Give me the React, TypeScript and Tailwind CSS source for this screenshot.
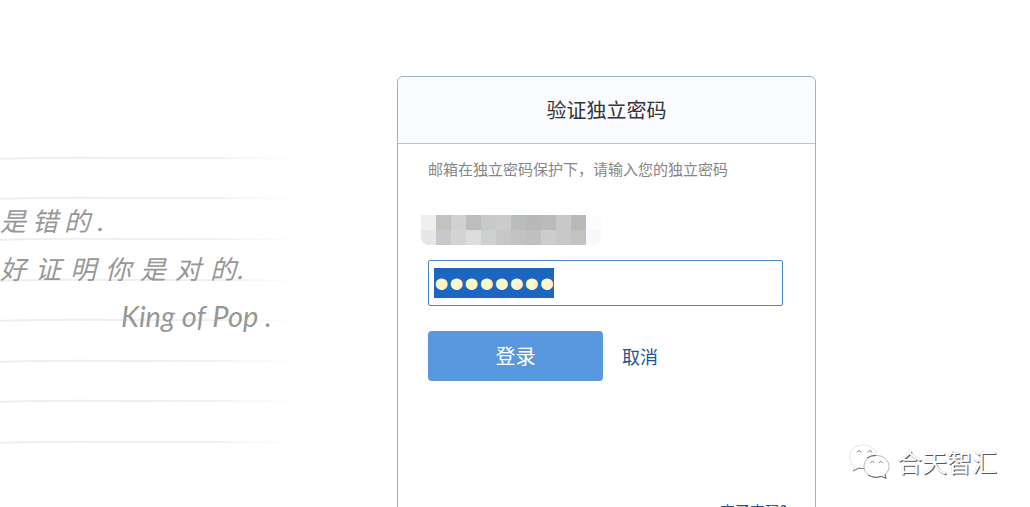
import { useEffect, useRef } from 'react';

const mosaic = [
  '#f0efee', '#c3c2c1', '#cfd1d4', '#bfbdbb', '#c7c9cc', '#cccbc9', '#b9bdbb', '#b7b8b7', '#bababa', '#c7c8c8', '#bab9b7', '#fbfcfe',
  '#e7e6e5', '#c6c8cb', '#d5d3d1', '#dcdddd', '#cdd0cf', '#c7c7c7', '#c2c2c1', '#bebfc1', '#cdcdcd', '#c8c8c8', '#c3c2bf', '#f8f9fb',
];

const rules = [18, 58, 99, 140, 180, 221, 261, 302];

function Notebook() {
  return (
    <section className="relative h-[330px] w-full overflow-hidden leading-8 whitespace-nowrap text-[#979797]">
      <svg className="absolute inset-0" width="310" height="330" fill="none" aria-hidden="true">
        <defs>
          <linearGradient id="fade" gradientUnits="userSpaceOnUse" x1="0" x2="300" y1="0" y2="0">
            <stop offset="0" stopColor="#eeeeee" />
            <stop offset="0.7" stopColor="#f0f0f0" />
            <stop offset="1" stopColor="#ffffff" />
          </linearGradient>
        </defs>
        {rules.map((y) => (
          <path key={y} d={`M0 ${y + 0.8}C40 ${y - 1} 90 ${y - 0.5} 150 ${y}S250 ${y} 300 ${y + 0.5}`} stroke="url(#fade)" strokeWidth="2" />
        ))}
      </svg>
      <div className="relative pt-16 font-['Noto_Sans_CJK_SC',sans-serif] text-[26px] leading-8 italic">
        <p className="flex gap-1.5">
          <span>是</span>
          <span>错</span>
          <span>的</span>
          <span>.</span>
        </p>
        <p className="flex gap-[9px] pt-4">
          <span>好</span>
          <span>证</span>
          <span>明</span>
          <span>你</span>
          <span>是</span>
          <span>对</span>
          <span>的.</span>
        </p>
      </div>
      <p className="relative pt-4 pl-[121px] font-['Lato','Liberation_Sans',sans-serif] text-[29px] leading-8 italic">King of Pop .</p>
    </section>
  );
}

function Watermark() {
  return (
    <div className="flex items-center gap-[7px]">
      <svg className="shrink-0" width="42" height="36" viewBox="0 0 42 36" aria-hidden="true">
        <path d="M15.500 2C7.500 2 1.500 7 1.500 14c0 4 2 7 5 9l-1.500 5 6-3c2 .5 4 .8 6 .5C15 17 22 12 29 12 27.500 6 22 2 15.500 2Z" fill="#fff" stroke="#d8d8d8" strokeWidth="0.700" />
        <path d="M5 28l6-3q3 .8 6 .5" fill="none" stroke="#777" />
        <path d="M28.500 12.500C21 12.500 16 17.500 16 23.500s5 11 12.500 11q3 0 5-1l4.500 2-1-4c2.500-2 4-4.500 4-8 0-6-5-11-12.500-11Z" fill="#fff" stroke="#a9a9a9" strokeWidth="0.800" />
        <path d="M20 32q4 2.500 9 2.300l4.500-1 4.500 2-1-4M19 15q4-3 9-2.500" fill="none" stroke="#666" />
        <path d="M9 9.500q2-4 4 0M20 9.500q2-4 4 0M22.500 20q1.800-3.500 3.600 0M31 20q1.800-3.500 3.600 0" fill="none" stroke="#8c8c8c" />
      </svg>
      <span className="text-[25px] leading-9 whitespace-nowrap text-white [text-shadow:1px_1px_0_#555555,0_0_1px_#bbbbbb]">合天智汇</span>
    </div>
  );
}

export default function App() {
  const password = useRef<HTMLInputElement>(null);

  useEffect(() => {
    password.current?.focus();
    password.current?.select();
  }, []);

  return (
    <div className="grid h-screen grid-cols-[minmax(0,397fr)_419px_minmax(0,214fr)] grid-rows-[minmax(0,1fr)] overflow-hidden bg-white font-['Noto_Sans_CJK_SC',sans-serif]">
      <div className="pt-[140px]">
        <Notebook />
      </div>
      <main className="pt-[76px]">
        <div className="rounded-md border border-[#9fafc0]">
          <h1 className="rounded-t-md border-b border-[#bac5cf] bg-[#fafbff] text-center text-xl leading-[66px] font-normal text-[#333333]">验证独立密码</h1>
          <form className="pt-[13px] pr-8 pb-6 pl-[30px]" onSubmit={(e) => e.preventDefault()}>
            <p className="text-[15px] leading-6 text-[#868686]">邮箱在独立密码保护下，请输入您的独立密码</p>
            <div className="mt-[34px] -ml-[7px] grid w-[180px] grid-cols-12 overflow-hidden rounded-b-lg" aria-hidden="true">
              {mosaic.map((color, i) => (
                <span key={i} className="h-[15px]" style={{ backgroundColor: color }} />
              ))}
            </div>
            <div className="mt-[15px] flex h-[46px] items-center rounded-xs border border-[#4a89c8] px-[5px]">
              <input
                ref={password}
                type="password"
                defaultValue="12345678"
                aria-label="独立密码"
                className="h-[30px] w-full overflow-clip font-['Liberation_Sans',sans-serif] text-[43px] leading-[30px] text-[#333333] caret-transparent outline-none selection:bg-[#1b66beff] selection:text-[#fff5c8]"
              />
            </div>
            <div className="mt-[25px] flex items-center gap-[19px]">
              <button type="submit" className="h-[50px] w-[175px] rounded-sm bg-[#5998de] text-xl text-white">登录</button>
              <a href="#cancel" className="text-lg text-[#1e5494]">取消</a>
            </div>
            <div className="-mr-1 mt-[118px] text-right text-[15px] leading-6">
              <a href="#forgot" className="text-[#1e5494]">忘了密码?</a>
            </div>
          </form>
        </div>
      </main>
      <aside className="flex items-end pb-7 pl-8">
        <Watermark />
      </aside>
    </div>
  );
}
